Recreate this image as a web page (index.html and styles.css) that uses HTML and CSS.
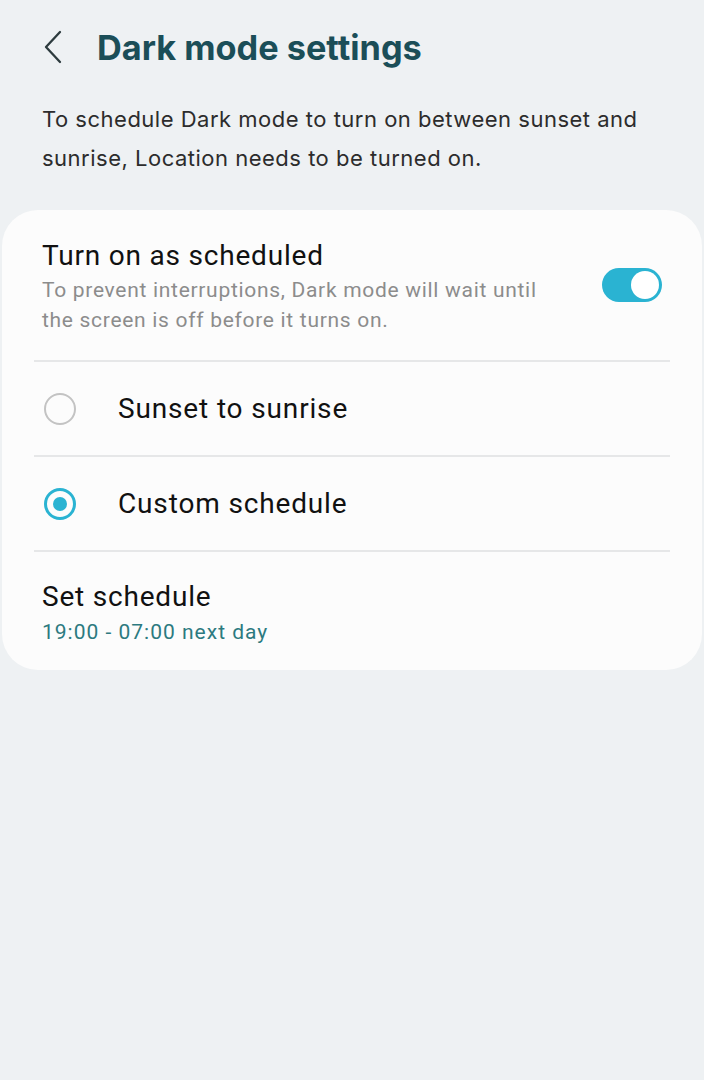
FILE: index.html
```html
<!DOCTYPE html>
<html>
<head>
<meta charset="utf-8">
<link rel="stylesheet" href="styles.css">
</head>
<body>
<div class="screen">
  <header class="topbar">
    <svg class="back" width="22" height="34" viewBox="0 0 22 34"><path d="M18 2 L4 17 L18 32" fill="none" stroke="#2d3b3e" stroke-width="2.3" stroke-linecap="round" stroke-linejoin="round"/></svg>
    <h1 class="title">Dark mode settings</h1>
  </header>
  <p class="intro">To schedule Dark mode to turn on between sunset and sunrise, Location needs to be turned on.</p>
  <section class="card">
    <div class="row switch-row">
      <div class="texts">
        <div class="label">Turn on as scheduled</div>
        <div class="sub">To prevent interruptions, Dark mode will wait until the screen is off before it turns on.</div>
      </div>
      <div class="toggle"><span class="knob"></span></div>
    </div>
    <div class="divider"></div>
    <div class="row radio-row">
      <span class="radio"></span>
      <span class="label">Sunset to sunrise</span>
    </div>
    <div class="divider"></div>
    <div class="row radio-row">
      <span class="radio on"></span>
      <span class="label">Custom schedule</span>
    </div>
    <div class="divider"></div>
    <div class="row sched-row">
      <div class="label">Set schedule</div>
      <div class="sub teal">19:00 - 07:00 next day</div>
    </div>
  </section>
</div>
</body>
</html>
```
FILE: styles.css
```css
html, body {
  margin: 0;
  padding: 0;
  background: #eef1f3;
}
.screen {
  width: 704px;
  height: 1080px;
  background: #eef1f3;
  font-family: Roboto, "Liberation Sans", sans-serif;
}
.topbar {
  display: flex;
  align-items: center;
  height: 94px;
  padding-left: 42px;
}
.back {
  display: block;
  margin-right: 33px;
}
.title {
  margin: 0;
  font-family: Inter, "Open Sans", sans-serif;
  font-weight: 700;
  font-size: 34.3px;
  color: #1b4e58;
  letter-spacing: 0;
}
.intro {
  margin: 0;
  padding: 6px 20px 0 42px;
  font-family: Inter, "Open Sans", sans-serif;
  font-size: 22px;
  letter-spacing: 0.5px;
  line-height: 39px;
  color: #2c2c2c;
  height: 110px;
}
.card {
  margin: 0 2px;
  background: #fcfcfc;
  border-radius: 36px;
  padding: 0 32px 14px;
  height: 460px;
  box-sizing: border-box;
}
.row {
  display: flex;
  padding: 0 8px;
}
.switch-row {
  align-items: center;
  justify-content: space-between;
  height: 150px;
}
.label {
  font-size: 28px;
  letter-spacing: 0.8px;
  color: #111;
  line-height: 34px;
}
.sub {
  font-size: 21px;
  letter-spacing: 0.7px;
  color: #8c8c8c;
  line-height: 30px;
  margin-top: 2px;
}
.switch-row .texts {
  width: 520px;
  padding-top: 4px;
}
.toggle {
  width: 60px;
  height: 34px;
  border-radius: 17px;
  background: #2ab3d2;
  position: relative;
}
.knob {
  position: absolute;
  right: 3px;
  top: 3px;
  width: 28px;
  height: 28px;
  border-radius: 50%;
  background: #fff;
}
.divider {
  height: 2px;
  background: #e6e7e8;
}
.radio-row {
  align-items: center;
  height: 93px;
}
.radio-row .label {
  letter-spacing: 0.85px;
}
.radio {
  width: 28px;
  height: 28px;
  border: 2px solid #c3c3c3;
  border-radius: 50%;
  margin: 0 42px 0 2px;
  box-sizing: content-box;
  position: relative;
  flex: none;
}
.radio.on {
  border: 3px solid #2ab3d2;
  width: 26px;
  height: 26px;
}
.radio.on::after {
  content: "";
  position: absolute;
  left: 6px;
  top: 6px;
  width: 14px;
  height: 14px;
  border-radius: 50%;
  background: #2ab3d2;
}
.sched-row {
  flex-direction: column;
  padding-top: 28px;
}
.sub.teal {
  color: #2c7a80;
  margin-top: 3px;
  letter-spacing: 1px;
}
```
